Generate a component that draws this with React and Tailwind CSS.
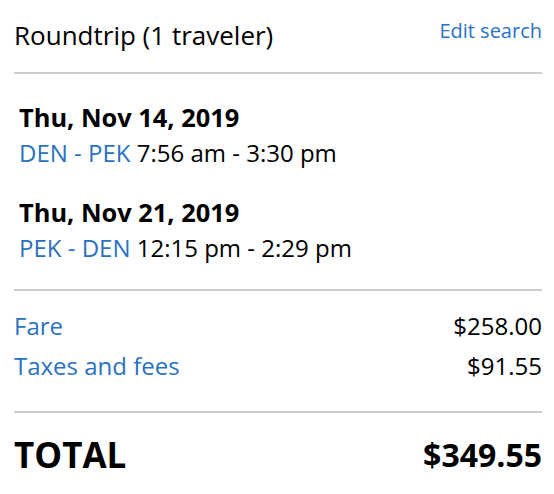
export default function App() {
  return (
    <div className="w-[554px] h-[494px] bg-white pl-[14px] pr-[12px] text-black font-['Open_Sans',sans-serif]">
      <div className="flex justify-between items-start h-[72px]">
        <div className="mt-[20px] text-[26px] leading-[30px]">Roundtrip (1 traveler)</div>
        <div className="mt-[18px] text-[20px] leading-[26px] text-[#2a72c0]">Edit search</div>
      </div>
      <div className="h-[2px] bg-[#cccccc]" />
      <div className="pl-[5px] pt-[25px]">
        <div className="text-[25.4px] leading-[36px] font-bold">Thu, Nov 14, 2019</div>
        <div className="text-[24px] leading-[36px]">
          <span className="text-[#2a72c0]">DEN - PEK</span> 7:56 am - 3:30 pm
        </div>
        <div className="mt-[23px] text-[25.4px] leading-[36px] font-bold">Thu, Nov 21, 2019</div>
        <div className="text-[24px] leading-[36px]">
          <span className="text-[#2a72c0]">PEK - DEN</span> 12:15 pm - 2:29 pm
        </div>
      </div>
      <div className="mt-[23px] h-[2px] bg-[#cccccc]" />
      <div className="pt-[15px] pb-[25px]">
        <div className="flex justify-between text-[24px] leading-[40px]">
          <span className="text-[#2a72c0]">Fare</span>
          <span>$258.00</span>
        </div>
        <div className="flex justify-between text-[24px] leading-[40px]">
          <span className="text-[#2a72c0]">Taxes and fees</span>
          <span>$91.55</span>
        </div>
      </div>
      <div className="h-[2px] bg-[#cccccc]" />
      <div className="flex justify-between items-center pt-[19px] font-bold">
        <span className="text-[35px] leading-[46px]">TOTAL</span>
        <span className="text-[32px] leading-[46px]">$349.55</span>
      </div>
    </div>
  );
}
